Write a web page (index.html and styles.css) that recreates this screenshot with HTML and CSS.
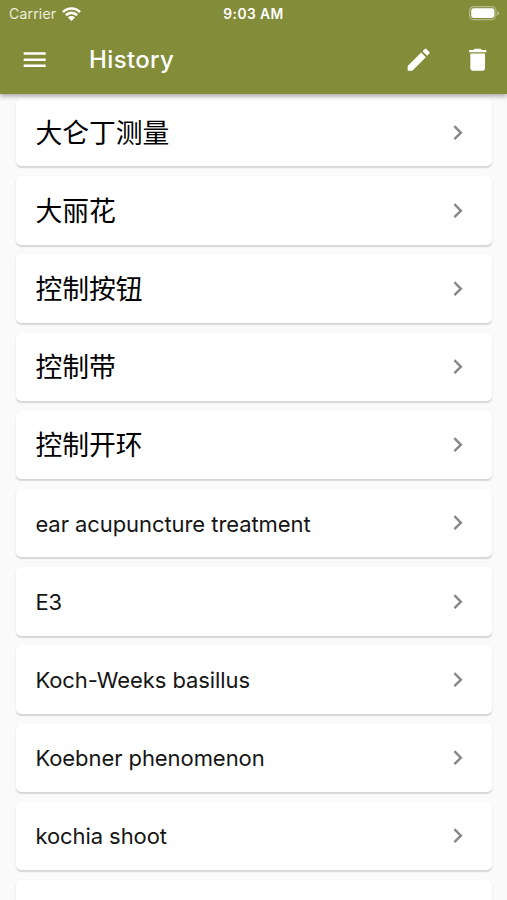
FILE: index.html
```html
<!DOCTYPE html>
<html lang="en">
<head>
<meta charset="utf-8">
<title>History</title>
<link rel="stylesheet" href="styles.css">
</head>
<body>
<svg class="defs" aria-hidden="true"><symbol id="chevron" viewBox="0 0 24 24"><path d="M10 6 8.59 7.41 13.17 12l-4.58 4.59L10 18l6-6z"/></symbol></svg>
<header class="header">
  <div class="status">
    <div class="signal">
      <span class="carrier">Carrier</span>
      <svg class="wifi" viewBox="0 0 19 14"><path d="M1 5.1a12 12 0 0 1 17 0M3.9 8.2a8 8 0 0 1 11.2 0" fill="none" stroke="currentColor" stroke-width="2.6"/><path d="M5.9 10.5a5.2 5.2 0 0 1 7.2 0L9.5 13.9z" fill="currentColor"/></svg>
    </div>
    <span class="time">9:03 AM</span>
    <svg class="battery" viewBox="0 0 31 15"><rect x=".6" y=".6" width="26.3" height="13" rx="4" fill="none" stroke="currentColor" stroke-width="1.2" opacity=".4"/><rect x="2.2" y="2.3" width="23.2" height="9.6" rx="2.4" fill="currentColor"/><path d="M28.3 5v4.4q1.8-.7 1.8-2.2T28.3 5z" fill="currentColor" opacity=".45"/></svg>
  </div>
  <div class="toolbar">
    <svg class="icon" viewBox="0 0 24 24"><path d="M3 18h18v-2H3zm0-5h18v-2H3zm0-7v2h18V6z"/></svg>
    <h1 class="title">History</h1>
    <svg class="icon" viewBox="0 0 24 24"><path d="M3 17.25V21h3.75L17.81 9.94l-3.75-3.75zM20.71 7.04a1 1 0 0 0 0-1.41l-2.34-2.34a1 1 0 0 0-1.41 0l-1.83 1.83 3.75 3.75z"/></svg>
    <svg class="icon trash" viewBox="0 0 24 24"><path d="M6 19c0 1.1.9 2 2 2h8c1.1 0 2-.9 2-2V7H6zM19 4h-3.5l-1-1h-5l-1 1H5v2h14z"/></svg>
  </div>
</header>
<main class="list">
  <div class="card"><span class="cjk" lang="zh">大仑丁测量</span><svg class="chevron"><use href="#chevron"/></svg></div>
  <div class="card"><span class="cjk" lang="zh">大丽花</span><svg class="chevron"><use href="#chevron"/></svg></div>
  <div class="card"><span class="cjk" lang="zh">控制按钮</span><svg class="chevron"><use href="#chevron"/></svg></div>
  <div class="card"><span class="cjk" lang="zh">控制带</span><svg class="chevron"><use href="#chevron"/></svg></div>
  <div class="card"><span class="cjk" lang="zh">控制开环</span><svg class="chevron"><use href="#chevron"/></svg></div>
  <div class="card"><span class="latin">ear acupuncture treatment</span><svg class="chevron"><use href="#chevron"/></svg></div>
  <div class="card"><span class="latin">E3</span><svg class="chevron"><use href="#chevron"/></svg></div>
  <div class="card"><span class="latin">Koch-Weeks basillus</span><svg class="chevron"><use href="#chevron"/></svg></div>
  <div class="card"><span class="latin">Koebner phenomenon</span><svg class="chevron"><use href="#chevron"/></svg></div>
  <div class="card"><span class="latin">kochia shoot</span><svg class="chevron"><use href="#chevron"/></svg></div>
  <div class="card card-partial"></div>
</main>
</body>
</html>
```
FILE: styles.css
```css
* { box-sizing: border-box; }
body {
  margin: 0;
  height: 900px;
  overflow: hidden;
  display: flex;
  flex-direction: column;
  background: #fafafa;
  color: #151515;
  font-family: Inter, "Noto Sans CJK SC", sans-serif;
}
.defs { display: none; }
.header {
  position: relative;
  z-index: 1;
  flex: none;
  height: 94px;
  background: #838c39;
  color: #fff;
  box-shadow: 0 2px 5px rgba(0, 0, 0, .36);
}
.status {
  display: grid;
  grid-template-columns: 1fr auto 1fr;
  align-items: center;
  height: 26px;
  padding: 1px 7px 0 9px;
  font-size: 14px;
  line-height: 20px;
}
.signal { display: flex; align-items: center; gap: 6px; }
.carrier { color: #eeeedb; letter-spacing: .2px; }
.wifi { width: 19px; height: 14px; }
.time { margin-right: 2px; font-size: 13.8px; font-weight: 600; letter-spacing: .42px; }
.battery { width: 31px; height: 15px; justify-self: end; }
.toolbar {
  display: flex;
  align-items: center;
  height: 68px;
  padding: 0 14.5px 0 20.2px;
}
.icon { flex: none; width: 29.4px; height: 29.4px; fill: #fff; }
.trash { margin-left: 29.4px; }
.title {
  flex: 1;
  margin: 0 0 0 39.5px;
  font-size: 24px;
  line-height: 30px;
  font-weight: 500;
  letter-spacing: .35px;
}
.list {
  flex: 1;
  min-height: 0;
  overflow: hidden;
  display: flex;
  flex-direction: column;
  gap: 9.8px;
  padding: 4px 15px 0 16px;
}
.card {
  flex: none;
  display: flex;
  align-items: center;
  justify-content: space-between;
  height: 68.4px;
  padding: 0 19.4px;
  background: #fff;
  border-radius: 5px;
  box-shadow: 0 1.4px 1.2px rgba(0, 0, 0, .12), 0 1px 3px rgba(0, 0, 0, .05);
}
.card-partial { flex: 1; height: auto; min-height: 0; border-radius: 5px 5px 0 0; }
.cjk { font-family: "Noto Sans CJK SC", sans-serif; font-size: 26.8px; line-height: 40px; color: #000; margin-top: -1px; }
.latin { font-size: 22px; line-height: 30px; letter-spacing: -.07px; margin-top: 1px; }
.chevron { width: 29.4px; height: 29.4px; fill: #888; }
```
